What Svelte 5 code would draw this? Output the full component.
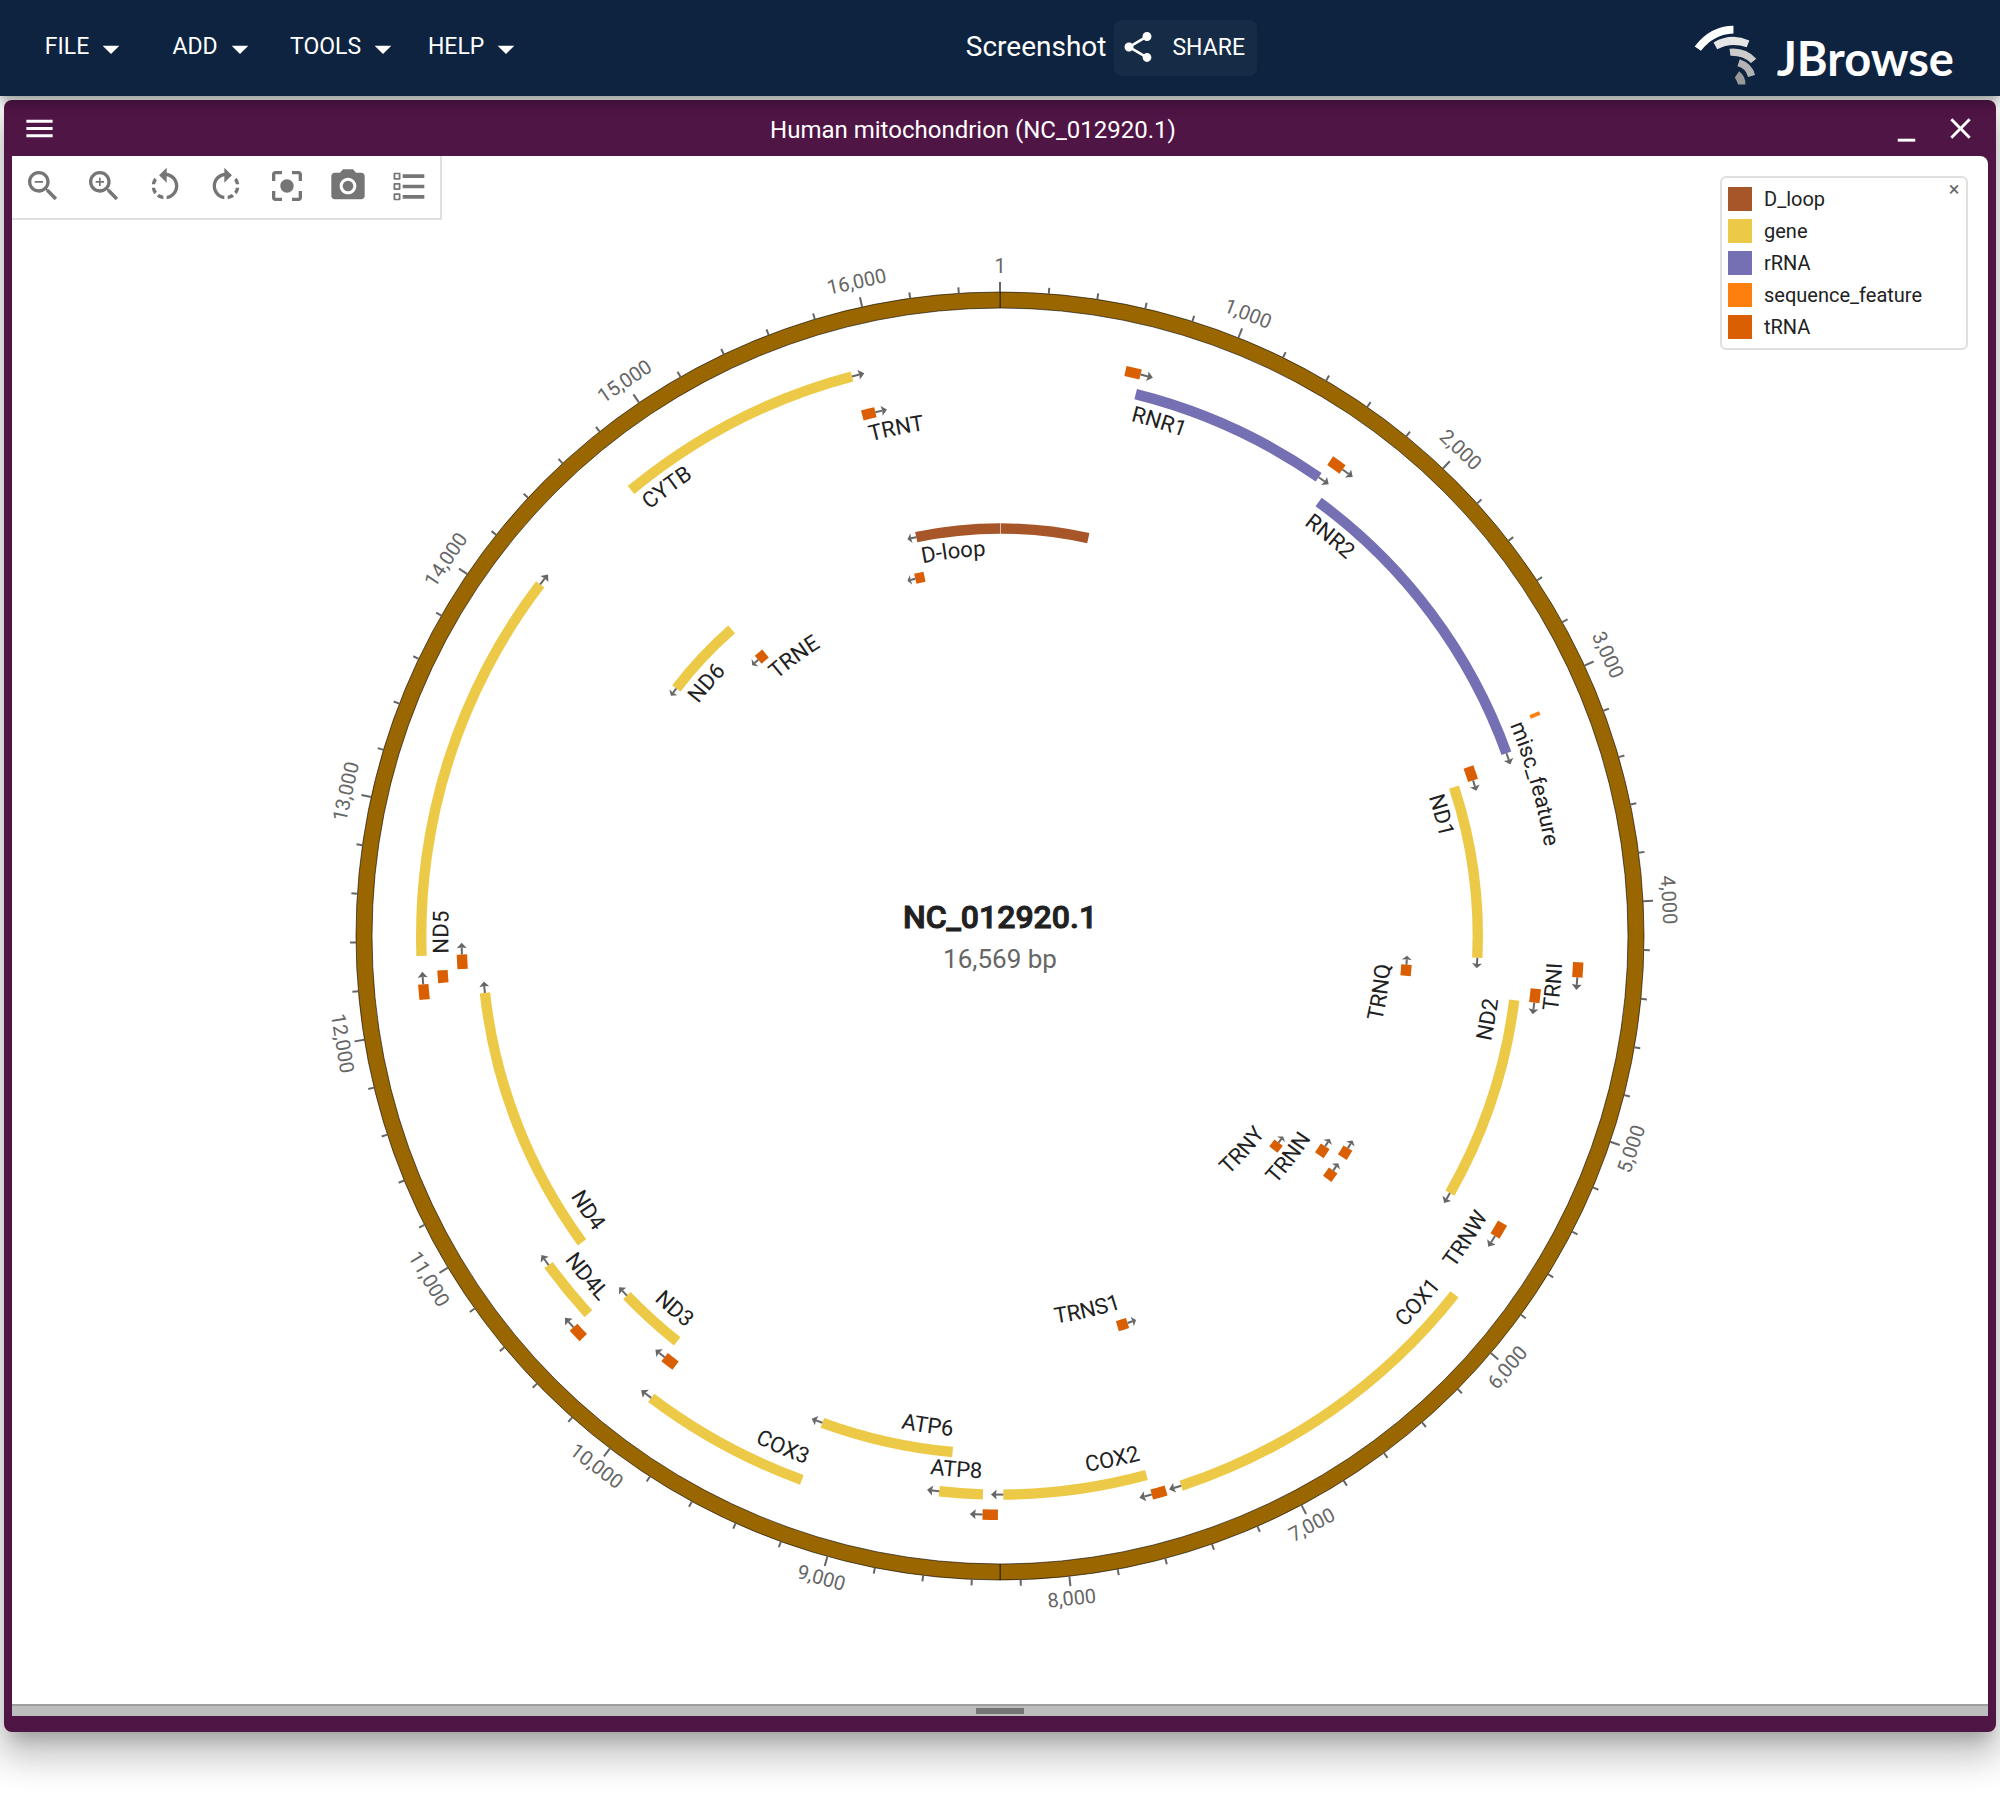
<script>
  const GENOME = 16569;
  const RING_INNER = 628;
  const RING_OUTER = 644;
  const FORWARD_RADIUS = 578.8;
  const REVERSE_RADIUS = 407.5;
  const ROW_STEP = 20.2;
  const BAR = 10.4;
  const ARROW_SPAN = 0.022;
  const LABEL_LEAD = 0.003;

  const colors = {
    D_loop: '#a65628',
    gene: '#edc948',
    rRNA: '#7570b3',
    sequence_feature: '#ff7f0e',
    tRNA: '#d95f02'
  };

  const menus = ['FILE', 'ADD', 'TOOLS', 'HELP'];

  // type, first base, last base, strand (0 and -2 draw no arrow), row, label
  const raw = [
    ['D_loop', 16024, 16569, -1, 0, 'D-loop'],
    ['D_loop', 5, 576, -2, 0, ''],
    ['tRNA', 577, 647, 1, 0, ''],
    ['rRNA', 648, 1601, 1, 1, 'RNR1'],
    ['tRNA', 1602, 1670, 1, 0, ''],
    ['rRNA', 1671, 3229, 1, 2, 'RNR2'],
    ['sequence_feature', 3101, 3118, 0, 0, 'misc_feature'],
    ['tRNA', 3230, 3304, 1, 4, ''],
    ['gene', 3307, 4262, 1, 5, 'ND1'],
    ['tRNA', 4263, 4331, 1, 0, 'TRNI'],
    ['tRNA', 4329, 4400, -1, 0, 'TRNQ'],
    ['tRNA', 4402, 4469, 1, 2, ''],
    ['gene', 4470, 5511, 1, 3, 'ND2'],
    ['tRNA', 5512, 5579, 1, 0, 'TRNW'],
    ['tRNA', 5587, 5655, -1, 0, ''],
    ['tRNA', 5657, 5729, -1, 1, 'TRNN'],
    ['tRNA', 5761, 5826, -1, 0, ''],
    ['tRNA', 5826, 5891, -1, 3, 'TRNY'],
    ['gene', 5904, 7445, 1, 0, 'COX1'],
    ['tRNA', 7446, 7514, -1, 0, 'TRNS1'],
    ['tRNA', 7518, 7585, 1, 0, ''],
    ['gene', 7586, 8269, 1, 1, 'COX2'],
    ['tRNA', 8295, 8364, 1, 0, ''],
    ['gene', 8366, 8572, 1, 1, 'ATP8'],
    ['gene', 8527, 9207, 1, 3, 'ATP6'],
    ['gene', 9207, 9990, 1, 0, 'COX3'],
    ['tRNA', 9991, 10058, 1, 2, ''],
    ['gene', 10059, 10404, 1, 3, 'ND3'],
    ['tRNA', 10405, 10469, 1, 0, ''],
    ['gene', 10470, 10766, 1, 1, 'ND4L'],
    ['gene', 10760, 12137, 1, 3, 'ND4'],
    ['tRNA', 12138, 12206, 1, 0, ''],
    ['tRNA', 12207, 12265, 0, 1, ''],
    ['tRNA', 12266, 12336, 1, 2, ''],
    ['gene', 12337, 14148, 1, 0, 'ND5'],
    ['gene', 14149, 14673, -1, 0, 'ND6'],
    ['tRNA', 14674, 14742, -1, 2, 'TRNE'],
    ['gene', 14747, 15887, 1, 0, 'CYTB'],
    ['tRNA', 15888, 15953, 1, 2, 'TRNT'],
    ['tRNA', 15956, 16023, -1, 2, '']
  ];

  const angleOf = (base) => (base / GENOME) * Math.PI * 2;

  function at(radius, angle) {
    return `${(radius * Math.sin(angle)).toFixed(2)} ${(-radius * Math.cos(angle)).toFixed(2)}`;
  }

  function band(inner, outer, a0, a1) {
    const large = a1 - a0 > Math.PI ? 1 : 0;
    return `M${at(outer, a0)}A${outer} ${outer} 0 ${large} 1 ${at(outer, a1)}L${at(inner, a1)}A${inner} ${inner} 0 ${large} 0 ${at(inner, a0)}Z`;
  }

  const isLower = (a) => a > Math.PI / 2 && a < Math.PI * 1.5;

  const features = raw.map(([type, first, last, strand, row, label], i) => {
    const radius = (strand < 0 ? REVERSE_RADIUS : FORWARD_RADIUS) - row * ROW_STEP;
    const a0 = angleOf(first - 1);
    const a1 = angleOf(last);
    const lower = isLower((a0 + a1) / 2);
    const textRadius = radius - (lower ? 16 : 27);
    const textStart = a0 + LABEL_LEAD;
    const reach = 1.2;
    const labelPath = lower
      ? `M${at(textRadius, textStart + reach)}A${textRadius} ${textRadius} 0 0 0 ${at(textRadius, textStart)}`
      : `M${at(textRadius, textStart)}A${textRadius} ${textRadius} 0 0 1 ${at(textRadius, textStart + reach)}`;
    let stem = '';
    let head = '';
    if (strand === 1 || strand === -1) {
      const from = strand === 1 ? a1 : a0;
      const neck = from + strand * ARROW_SPAN * 0.6;
      const back = from + strand * ARROW_SPAN * 0.54;
      const tip = from + strand * ARROW_SPAN;
      stem = `M${at(radius, from)}L${at(radius, neck)}`;
      head = `M${at(radius, tip)}L${at(radius + 5, back)}L${at(radius, neck)}L${at(radius - 5, back)}Z`;
    }
    return {
      id: `label-${i}`,
      color: colors[type],
      shape: band(radius - BAR / 2, radius + BAR / 2, a0, a1),
      label,
      lower,
      labelPath,
      stem,
      head
    };
  });

  const ticks = [];
  for (let base = 200; base < GENOME; base += 200) {
    const angle = angleOf(base);
    const major = base % 1000 === 0;
    const lower = isLower(angle);
    const degrees = (angle * 180) / Math.PI;
    ticks.push({
      base,
      line: `M${at(RING_OUTER, angle)}L${at(RING_OUTER + (major ? 10 : 6), angle)}`,
      text: major ? base.toLocaleString('en-US') : '',
      turn: lower ? `rotate(${degrees - 180}) translate(0 673)` : `rotate(${degrees}) translate(0 -663)`
    });
  }

  const halves = [band(RING_INNER, RING_OUTER, 0, Math.PI), band(RING_INNER, RING_OUTER, Math.PI, Math.PI * 2)];

  const tools = [
    {
      name: 'Zoom out',
      d: 'M15.5 14h-.79l-.28-.27C15.41 12.59 16 11.11 16 9.5 16 5.91 13.09 3 9.5 3S3 5.91 3 9.5 5.91 16 9.5 16c1.61 0 3.09-.59 4.23-1.57l.27.28v.79l5 4.99L20.49 19l-4.99-5zm-6 0C7.01 14 5 11.99 5 9.5S7.01 5 9.5 5 14 7.01 14 9.5 11.99 14 9.5 14zM7 9h5v1H7z'
    },
    {
      name: 'Zoom in',
      d: 'M15.5 14h-.79l-.28-.27C15.41 12.59 16 11.11 16 9.5 16 5.91 13.09 3 9.5 3S3 5.91 3 9.5 5.91 16 9.5 16c1.61 0 3.09-.59 4.23-1.57l.27.28v.79l5 4.99L20.49 19l-4.99-5zm-6 0C7.01 14 5 11.99 5 9.5S7.01 5 9.5 5 14 7.01 14 9.5 11.99 14 9.5 14zM12 10h-2v2H9v-2H7V9h2V7h1v2h2v1z'
    },
    {
      name: 'Rotate counter-clockwise',
      d: 'M7.11 8.53 5.7 7.11C4.8 8.27 4.24 9.61 4.07 11h2.02c.14-.87.49-1.72 1.02-2.47zM6.09 13H4.07c.17 1.39.72 2.73 1.62 3.89l1.41-1.42c-.52-.75-.87-1.59-1.01-2.47zm1.01 5.32c1.16.9 2.51 1.44 3.9 1.61V17.9c-.87-.15-1.71-.49-2.46-1.03L7.1 18.32zM13 4.07V1L8.45 5.55 13 10V6.09c2.84.48 5 2.94 5 5.91s-2.16 5.43-5 5.91v2.02c3.95-.49 7-3.85 7-7.93s-3.05-7.44-7-7.93z'
    },
    {
      name: 'Rotate clockwise',
      d: 'M15.55 5.55 11 1v3.07C7.06 4.56 4 7.92 4 12s3.05 7.44 7 7.93v-2.02c-2.84-.48-5-2.94-5-5.91s2.16-5.43 5-5.91V10l4.55-4.45zM19.93 11c-.17-1.39-.72-2.73-1.62-3.89l-1.42 1.42c.54.75.88 1.6 1.02 2.47h2.02zM13 17.9v2.02c1.39-.17 2.74-.71 3.9-1.61l-1.44-1.44c-.75.54-1.59.89-2.46 1.03zm3.89-2.42 1.42 1.41c.9-1.16 1.45-2.5 1.62-3.89h-2.02c-.14.87-.48 1.72-1.02 2.48z'
    },
    {
      name: 'Fit to window',
      d: 'M5 15H3v4c0 1.1.9 2 2 2h4v-2H5v-4zM5 5h4V3H5c-1.1 0-2 .9-2 2v4h2V5zm14-2h-4v2h4v4h2V5c0-1.1-.9-2-2-2zm0 16h-4v2h4c1.1 0 2-.9 2-2v-4h-2v4zM12 8c-2.21 0-4 1.79-4 4s1.79 4 4 4 4-1.79 4-4-1.79-4-4-4z'
    },
    {
      name: 'Export image',
      d: 'M12 8.8a3.2 3.2 0 1 0 0 6.4 3.2 3.2 0 1 0 0-6.4M9 2 7.17 4H4c-1.1 0-2 .9-2 2v12c0 1.1.9 2 2 2h16c1.1 0 2-.9 2-2V6c0-1.1-.9-2-2-2h-3.17L15 2H9zm3 15c-2.76 0-5-2.24-5-5s2.24-5 5-5 5 2.24 5 5-2.24 5-5 5z'
    },
    {
      name: 'Track selector',
      d: 'M8.2 5h13v2.2h-13zM8.2 11.2h13v2.2h-13zM8.2 17.4h13v2.2h-13zM3.3 4h3q.6 0 .6.6v3q0 .6-.6.6h-3q-.6 0-.6-.6v-3q0-.6.6-.6zm.5 1v2.2h2V5zM3.3 10.2h3q.6 0 .6.6v3q0 .6-.6.6h-3q-.6 0-.6-.6v-3q0-.6.6-.6zm.5 1v2.2h2v-2.2zM3.3 16.4h3q.6 0 .6.6v3q0 .6-.6.6h-3q-.6 0-.6-.6v-3q0-.6.6-.6zm.5 1v2.2h2v-2.2z'
    }
  ];
</script>

<div class="app">
  <header>
    <nav>
      {#each menus as menu}
        <button class="menu" type="button">
          {menu}
          <svg viewBox="0 0 24 24" aria-hidden="true"><path d="m7 10 5 5 5-5z" /></svg>
        </button>
      {/each}
    </nav>
    <div class="session">
      <span class="session-name">Screenshot</span>
      <button class="share" type="button">
        <svg viewBox="0 0 24 24" aria-hidden="true">
          <path d="M18 16.08c-.76 0-1.44.3-1.96.77L8.91 12.7c.05-.23.09-.46.09-.7s-.04-.47-.09-.7l7.05-4.11c.54.5 1.25.81 2.04.81 1.66 0 3-1.34 3-3s-1.34-3-3-3-3 1.34-3 3c0 .24.04.47.09.7L8.04 9.81C7.5 9.31 6.79 9 6 9c-1.66 0-3 1.34-3 3s1.34 3 3 3c.79 0 1.5-.31 2.04-.81l7.12 4.16c-.05.21-.08.43-.08.65 0 1.61 1.31 2.92 2.92 2.92s2.92-1.31 2.92-2.92-1.31-2.92-2.92-2.92z" />
        </svg>
        SHARE
      </button>
    </div>
    <div class="brand">
      <svg viewBox="100 76 190 180" aria-hidden="true">
        <path fill="#ffffff" d="M102 140Q150 78 219 78V101Q160 103 121 153Z" />
        <path fill="#e6e6e6" d="M159 128Q212 98 267 122L259 143Q212 126 170 149Z" />
        <path fill="#cccccc" d="M207 147Q255 142 288 177L272 190Q248 167 210 168Z" />
        <path fill="#b3b3b3" d="M238 179Q276 192 284 226L263 232Q254 204 231 200Z" />
        <path fill="#999999" d="M236 215Q256 230 255 255H233Q230 245 223 234Z" />
      </svg>
      <span>JBrowse</span>
    </div>
  </header>

  <main>
    <div class="titlebar">
      <button class="bar-button" type="button" aria-label="View menu">
        <svg viewBox="0 0 24 24" aria-hidden="true"><path d="M3 18h18v-2H3v2zm0-5h18v-2H3v2zm0-7v2h18V6H3z" /></svg>
      </button>
      <h1>Human mitochondrion (NC_012920.1)</h1>
      <div class="window-buttons">
        <button class="bar-button" type="button" aria-label="Minimize">
          <svg viewBox="0 0 24 24" aria-hidden="true"><path d="M6 19h12v2H6z" /></svg>
        </button>
        <button class="bar-button" type="button" aria-label="Close view">
          <svg viewBox="0 0 24 24" aria-hidden="true"><path d="M19 6.41 17.59 5 12 10.59 6.41 5 5 6.41 10.59 12 5 17.59 6.41 19 12 13.41 17.59 19 19 17.59 13.41 12z" /></svg>
        </button>
      </div>
    </div>

    <section class="view">
      <svg class="map" viewBox="-988 -780 1976 1548" role="img" aria-label="Circular map of NC_012920.1">
        {#each halves as half}
          <path class="ring" d={half} />
        {/each}
        <path class="tick" d="M0 -644V-654" />
        <text class="ruler" x="0" y="-663">1</text>
        {#each ticks as tick (tick.base)}
          <path class="tick" d={tick.line} />
          {#if tick.text}
            <text class="ruler" transform={tick.turn}>{tick.text}</text>
          {/if}
        {/each}
        {#each features as feature (feature.id)}
          <path d={feature.shape} fill={feature.color} />
          {#if feature.stem}
            <path class="stem" d={feature.stem} />
            <path class="head" d={feature.head} />
          {/if}
          {#if feature.label}
            <path id={feature.id} d={feature.labelPath} fill="none" />
            <text class="label" class:lower={feature.lower}>
              <textPath href={`#${feature.id}`} startOffset={feature.lower ? '100%' : '0%'}>{feature.label}</textPath>
            </text>
          {/if}
        {/each}
        <text class="name" x="0" y="-8">NC_012920.1</text>
        <text class="length" x="0" y="32">16,569 bp</text>
      </svg>

      <div class="toolbar">
        {#each tools as tool}
          <button type="button" aria-label={tool.name}>
            <svg viewBox="0 0 24 24" aria-hidden="true"><path fill-rule="evenodd" d={tool.d} /></svg>
          </button>
        {/each}
      </div>

      <aside class="legend">
        <ul>
          {#each Object.entries(colors) as [name, color]}
            <li><span class="swatch" style:background={color}></span>{name}</li>
          {/each}
        </ul>
        <button type="button" aria-label="Hide legend">×</button>
      </aside>
    </section>

    <div class="resize"><span></span></div>
  </main>
</div>

<style>
  :global(body) {
    background: #ffffff;
  }
  .app {
    font-family: Roboto, 'Liberation Sans', sans-serif;
    color: #212121;
    padding-bottom: 68px;
    overflow: hidden;
  }
  button {
    border: 0;
    background: none;
    color: inherit;
    font: inherit;
    cursor: pointer;
    padding: 0;
    display: flex;
    align-items: center;
    justify-content: center;
  }
  svg {
    display: block;
    fill: currentColor;
  }
  header {
    position: relative;
    z-index: 1;
    height: 96px;
    padding: 0 46px 0 24px;
    display: flex;
    justify-content: space-between;
    background: #0d233f;
    color: #ffffff;
    box-shadow:
      0 4px 8px -2px rgba(0, 0, 0, 0.2),
      0 8px 10px 0 rgba(0, 0, 0, 0.14),
      0 2px 20px 0 rgba(0, 0, 0, 0.12);
  }
  nav,
  .session {
    display: flex;
    align-items: center;
  }
  .menu {
    min-width: 128px;
    padding: 0 10px 2px;
    gap: 2px;
    font-size: 23px;
    line-height: 40px;
  }
  .menu svg {
    width: 40px;
    height: 40px;
    margin-top: 4px;
  }
  .session-name {
    font-size: 28px;
    line-height: 40px;
    padding: 0 8px 2px 0;
  }
  .share {
    height: 56px;
    padding: 0 12px 2px 6px;
    gap: 16px;
    border-radius: 8px;
    background: rgba(255, 255, 255, 0.04);
    font-size: 23px;
  }
  .share svg {
    width: 36px;
    height: 36px;
  }
  .brand {
    display: flex;
    align-items: flex-start;
    gap: 20px;
    padding: 25px 0 0 12px;
    font-family: Lato, 'Liberation Sans', sans-serif;
    font-size: 47px;
    line-height: 66px;
    font-weight: 700;
  }
  .brand svg {
    width: 63px;
    height: 60px;
  }
  main {
    margin: 4px 4px 0;
    padding: 0 8px 16px;
    border-radius: 8px;
    background: #4f1545;
    box-shadow:
      0 14px 16px -8px rgba(0, 0, 0, 0.2),
      0 24px 34px 4px rgba(0, 0, 0, 0.14),
      0 10px 44px 8px rgba(0, 0, 0, 0.12);
  }
  .titlebar {
    height: 56px;
    display: flex;
    align-items: center;
    justify-content: space-between;
    color: #ffffff;
  }
  .bar-button {
    width: 54px;
    height: 54px;
  }
  .bar-button svg {
    width: 35px;
    height: 35px;
  }
  .window-buttons {
    display: flex;
  }
  h1 {
    margin: 0;
    padding-top: 3px;
    font-size: 24px;
    line-height: 32px;
    font-weight: 400;
  }
  .view {
    position: relative;
    background: #ffffff;
    border-top-right-radius: 8px;
  }
  .map {
    width: 100%;
    height: auto;
  }
  .ring {
    fill: #996600;
    stroke: rgba(0, 0, 0, 0.6);
    stroke-width: 1px;
  }
  .tick {
    fill: none;
    stroke: #666666;
    stroke-width: 2px;
  }
  .ruler {
    fill: #666666;
    font-size: 20px;
    text-anchor: middle;
  }
  .label {
    fill: #212121;
    font-size: 22px;
  }
  .label.lower {
    text-anchor: end;
  }
  .stem {
    fill: none;
    stroke: #666666;
    stroke-width: 2px;
  }
  .head {
    fill: #666666;
  }
  .name {
    fill: #212121;
    stroke: #212121;
    stroke-width: 1px;
    font-size: 32px;
    font-weight: 500;
    text-anchor: middle;
  }
  .length {
    fill: #666666;
    font-size: 26px;
    text-anchor: middle;
  }
  .toolbar {
    position: absolute;
    top: 0;
    left: 0;
    display: flex;
    gap: 1px;
    padding: 0 1px 2px;
    background: #ffffff;
    border-right: 2px solid #e0e0e0;
    border-bottom: 2px solid #e0e0e0;
    color: #757575;
  }
  .toolbar button {
    width: 60px;
    height: 60px;
  }
  .toolbar svg {
    width: 40px;
    height: 40px;
  }
  .legend {
    position: absolute;
    top: 20px;
    right: 20px;
    width: 244px;
    border: 2px solid #e0e0e0;
    border-radius: 6px;
    background: #ffffff;
  }
  .legend ul {
    list-style: none;
    margin: 0;
    padding: 5px 6px;
    font-size: 20px;
    line-height: 32px;
  }
  .legend li {
    display: flex;
    align-items: center;
    gap: 12px;
  }
  .swatch {
    width: 24px;
    height: 24px;
  }
  .legend button {
    position: absolute;
    top: 1px;
    right: 4px;
    width: 16px;
    height: 20px;
    font-size: 20px;
    line-height: 20px;
    color: #666666;
  }
  .resize {
    display: flex;
    justify-content: center;
    padding: 2px 0;
    background: #bdbdbd;
    border-top: 2px solid #9e9e9e;
  }
  .resize span {
    width: 48px;
    height: 6px;
    background: #757575;
  }
</style>
